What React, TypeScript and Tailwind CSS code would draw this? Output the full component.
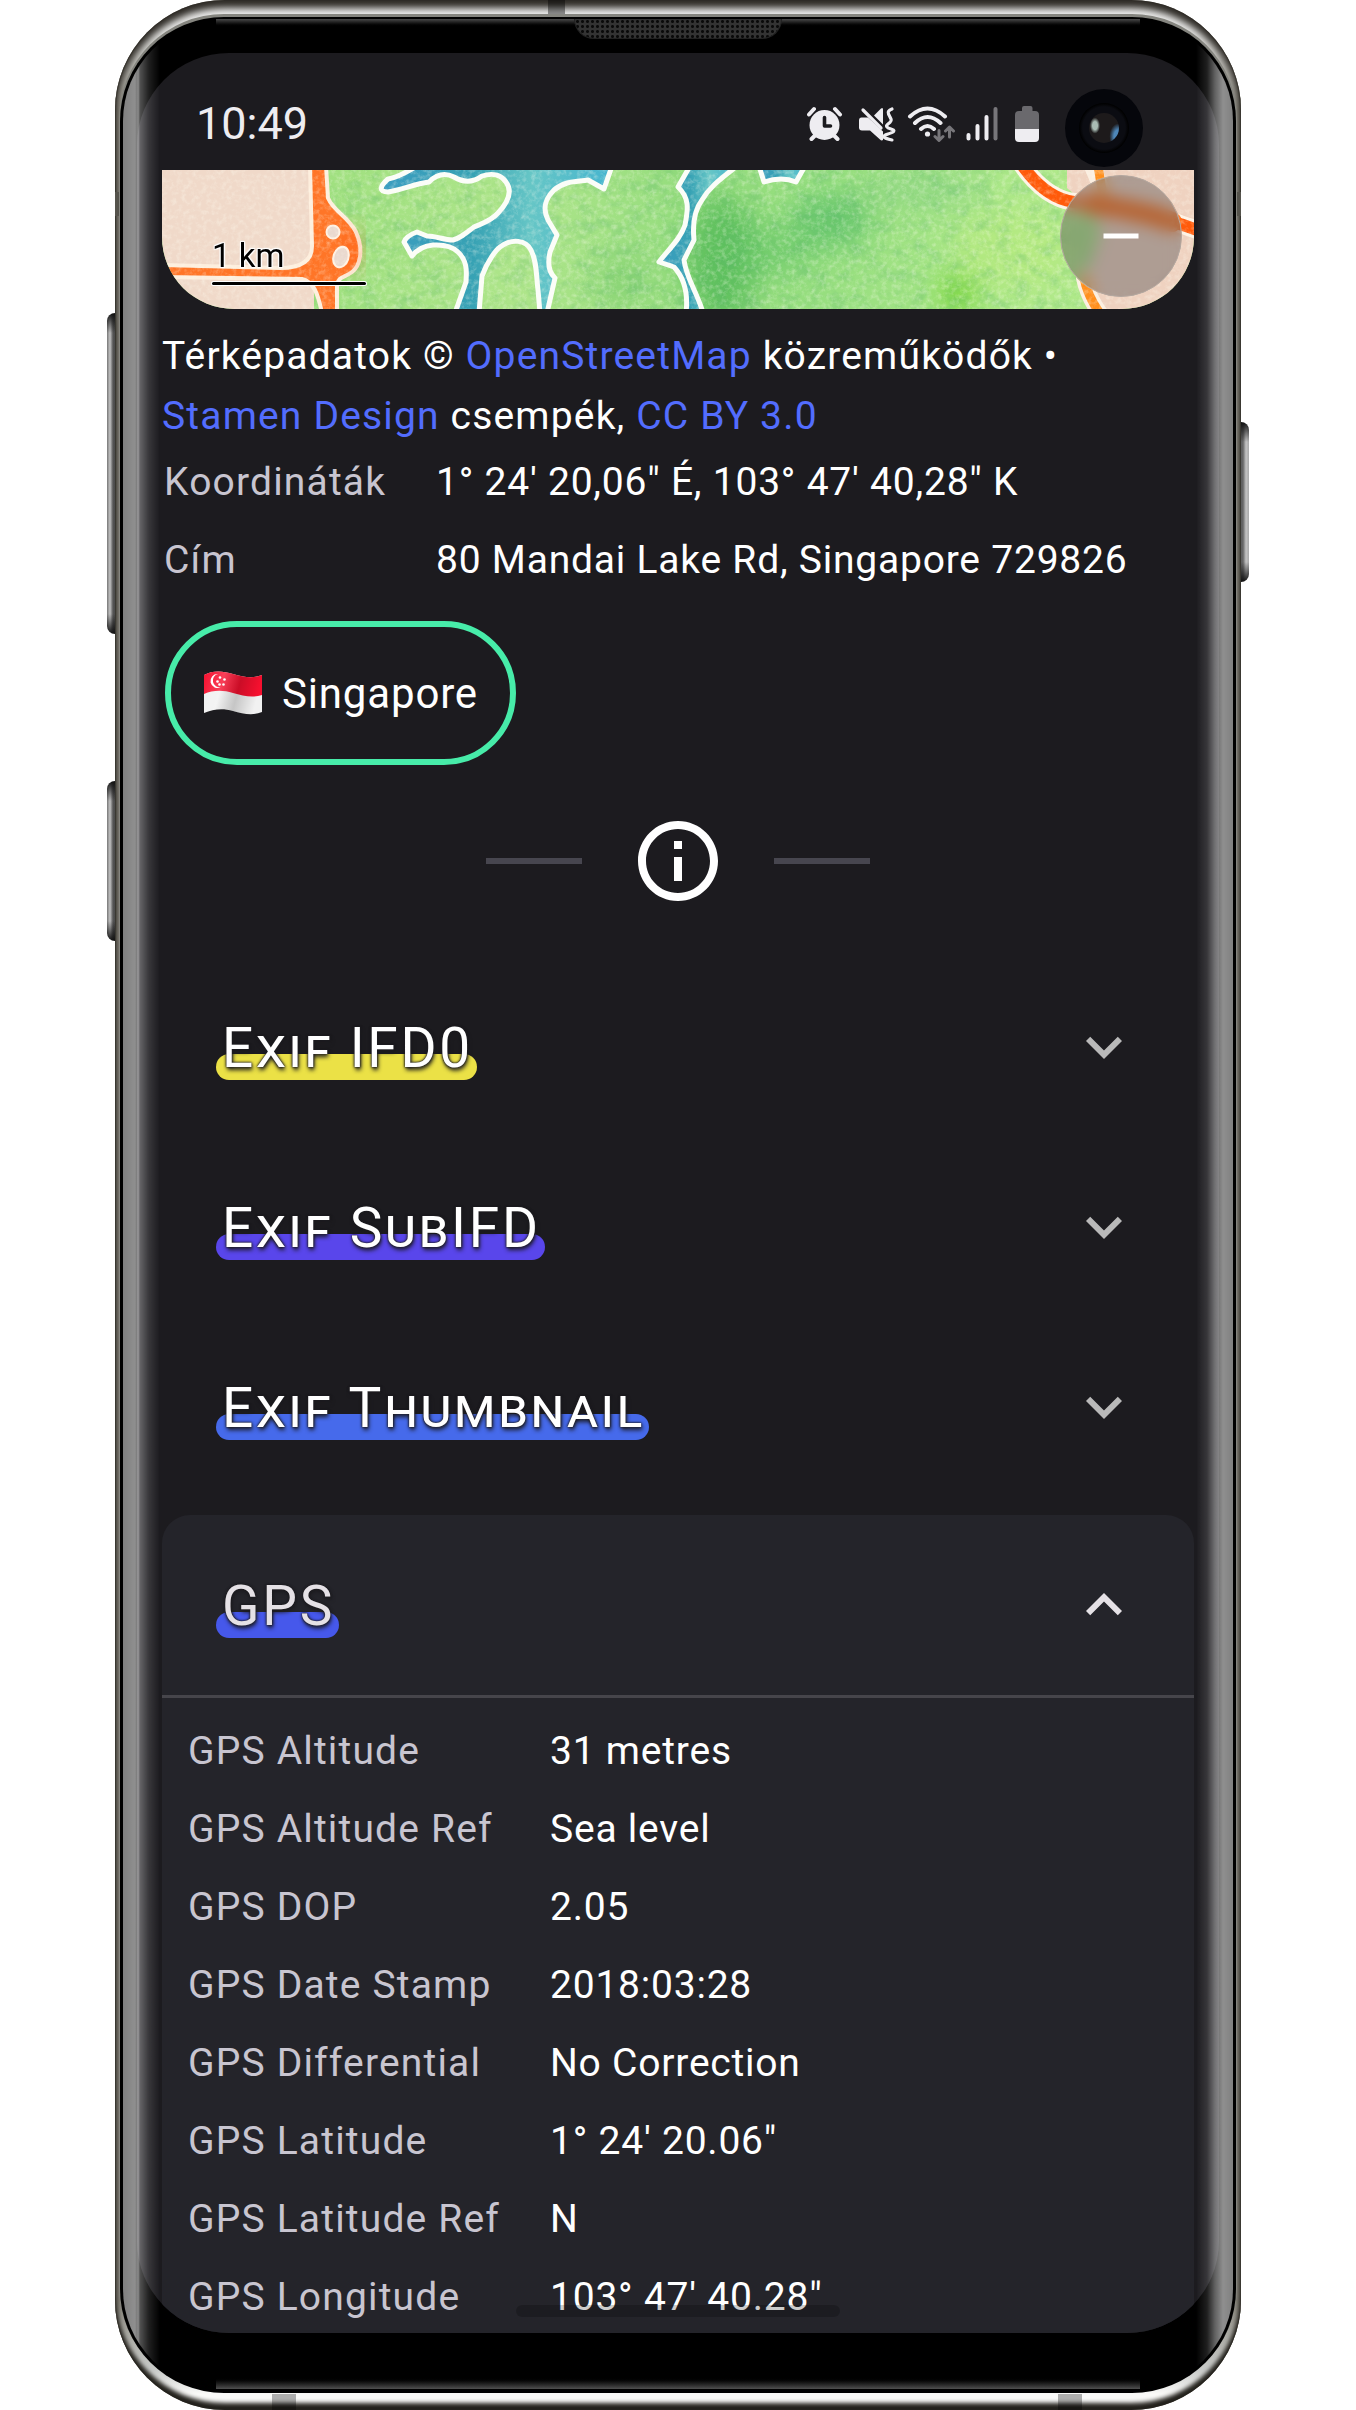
import { useState } from "react";

type Row = { label: string; value: string };
type Section = { title: string; highlight: string; rows: Row[] };

const placeRows: Row[] = [
  { label: "Koordináták", value: "1° 24' 20,06\" É, 103° 47' 40,28\" K" },
  { label: "Cím", value: "80 Mandai Lake Rd, Singapore 729826" },
];

const sections: Section[] = [
  { title: "Exif IFD0", highlight: "bg-[#ebe146]", rows: [] },
  { title: "Exif SubIFD", highlight: "bg-[#5946eb]", rows: [] },
  { title: "Exif Thumbnail", highlight: "bg-[#466aeb]", rows: [] },
  {
    title: "GPS",
    highlight: "bg-[#4658eb]",
    rows: [
      { label: "GPS Altitude", value: "31 metres" },
      { label: "GPS Altitude Ref", value: "Sea level" },
      { label: "GPS DOP", value: "2.05" },
      { label: "GPS Date Stamp", value: "2018:03:28" },
      { label: "GPS Differential", value: "No Correction" },
      { label: "GPS Latitude", value: "1° 24' 20.06\"" },
      { label: "GPS Latitude Ref", value: "N" },
      { label: "GPS Longitude", value: "103° 47' 40.28\"" },
    ],
  },
];

function StatusIcons() {
  return (
    <div className="flex items-center gap-2.5 text-[#eeedf1]" aria-hidden="true">
      <svg width="42" height="36" viewBox="0 0 42 36" fill="none">
        <circle cx="17.5" cy="19" r="15" fill="currentColor" />
        <path d="M2 8.500 7 3M28 3l5 5.500M4.500 33l4-4M30.500 33l-4-4" stroke="currentColor" strokeWidth="4" strokeLinecap="round" />
        <path d="M17.500 11.500V20H23.500" stroke="#1c1b1f" strokeWidth="3.600" strokeLinecap="round" strokeLinejoin="round" />
      </svg>
      <svg width="38" height="36" viewBox="0 0 38 36" fill="none">
        <path d="M2.500 11.500H9L24 25.500V34Q22.500 35 21 33.500L11 24.500H3Q0 24.500 0 21.500V14.500Q0 11.500 2.500 11.500Z" fill="currentColor" />
        <path d="M15 9.500 22 2.500Q24 1 24 3.500V18.500Z" fill="currentColor" />
        <path d="M4 4 22 22" stroke="currentColor" strokeWidth="3.200" strokeLinecap="round" />
        <path d="M33 3Q28 5 29.500 8T32 13 29 18 32 23 29 28 33 34" stroke="currentColor" strokeWidth="3.200" strokeLinecap="round" />
      </svg>
      <svg width="49" height="36" viewBox="0 0 49 36" fill="none" strokeLinecap="round">
        <path d="M3 10.500Q20.500-5.500 38 10.500M8 17Q20.500 5 33.500 17M14 23Q20.500 17 27 23" stroke="currentColor" strokeWidth="4" />
        <circle cx="20.500" cy="28" r="2.600" fill="currentColor" />
        <path d="M32 24.500V34M28 30.500 32 34.500 36 30.500M42.500 31V21M38.500 25 42.500 21 46.500 25" stroke="#77767a" strokeWidth="3" strokeLinejoin="round" />
      </svg>
      <svg width="39" height="36" viewBox="0 0 39 36" fill="none" strokeLinecap="round" strokeWidth="4">
        <path d="M2.500 29V32.500M11.500 20V32.500M20.500 11V32.500" stroke="currentColor" />
        <path d="M29.500 3V32.500" stroke="#77767a" />
      </svg>
      <svg width="24" height="36" viewBox="0 0 24 36">
        <path d="M7 2Q7 0 9 0H15.500Q17.500 0 17.500 2V5H20Q24 5 24 9V23H0V9Q0 5 4 5H7Z" fill="#6a696d" />
        <path d="M0 23H24V32Q24 36 20 36H4Q0 36 0 32Z" fill="currentColor" />
      </svg>
    </div>
  );
}

function WatercolorMap() {
  return (
    <svg className="absolute inset-0 size-full" viewBox="0 0 1032 139" preserveAspectRatio="xMidYMid slice" role="img" aria-label="Térkép">
      <defs>
        <linearGradient id="land" x1="0" x2="1" y1="0" y2="0">
          <stop offset="0.150" stopColor="#9fe07f" />
          <stop offset="0.350" stopColor="#aee58a" />
          <stop offset="0.500" stopColor="#96dd7e" />
          <stop offset="0.650" stopColor="#98df80" />
          <stop offset="0.850" stopColor="#b0e98a" />
        </linearGradient>
        <linearGradient id="water" x1="0" x2="1" y1="0" y2="0">
          <stop offset="0" stopColor="#3a9cc0" />
          <stop offset="0.400" stopColor="#37a2b4" />
          <stop offset="0.650" stopColor="#66c6c6" />
          <stop offset="1" stopColor="#45b4cf" />
        </linearGradient>
        <filter id="soft" x="-50%" y="-50%" width="200%" height="200%">
          <feGaussianBlur stdDeviation="14" />
        </filter>
        <filter id="pigment" x="0" y="0" width="100%" height="100%">
          <feTurbulence type="fractalNoise" baseFrequency="0.060 0.080" numOctaves="5" seed="4" />
          <feColorMatrix values="0 0 0 0 0.100  0 0 0 0 0.450  0 0 0 0 0.150  1.800 0 0 0 -0.800" />
        </filter>
        <filter id="paper" x="0" y="0" width="100%" height="100%">
          <feTurbulence type="fractalNoise" baseFrequency="0.200" numOctaves="4" seed="9" />
          <feColorMatrix values="0 0 0 0 1  0 0 0 0 1  0 0 0 0 0.900  0 1.600 0 0 -0.680" />
        </filter>
      </defs>
      <rect width="1032" height="139" fill="url(#land)" />
      <g filter="url(#soft)">
        <ellipse cx="560" cy="90" rx="36" ry="66" fill="#52b955" opacity="0.800" />
        <ellipse cx="670" cy="50" rx="40" ry="26" fill="#5cc168" opacity="0.800" />
        <ellipse cx="610" cy="80" rx="46" ry="26" fill="#62c566" opacity="0.600" />
        <ellipse cx="797" cy="122" rx="18" ry="20" fill="#72d42f" />
        <ellipse cx="850" cy="80" rx="60" ry="40" fill="#b5ea80" opacity="0.800" />
        <ellipse cx="760" cy="20" rx="60" ry="16" fill="#86d080" opacity="0.700" />
        <ellipse cx="460" cy="110" rx="26" ry="26" fill="#7acb6c" opacity="0.600" />
      </g>
      <rect width="1032" height="139" filter="url(#pigment)" opacity="0.400" />
      <path d="M0 0H152V139H0Z" fill="#f0d9c9" />
      <path d="M905-3H1035V142H934L922 112 940 60 926 36 905 18Z" fill="#efd2c0" />
      <g fill="url(#water)" stroke="#fbfdf8" strokeWidth="5" strokeLinejoin="round">
        <path d="M255-4Q235 8 226 9C218 16 216 22 226 22 240 20 252 14 267 12 275 4 284 3 292 7 302 13 312 12 320 6 332 2 340 6 344 12 350 20 348 30 336 43 328 52 318 54 312 57 303 64 298 68 291 70 282 70 274 66 265 66L255 62Q244 66 242 72L250 86Q258 76 271 75 288 74 296 82C307 92 304 106 304 112L293 143H317L320 106C326 90 334 80 338 77 350 68 364 70 369 80 375 92 374 104 376 120L378 143H385L393 108Q384 100 388 82L395 65 386 50C378 34 388 24 392 20 404 10 416 12 426 10L442 19 450-4Z" />
        <path d="M528-4 516 17C528 28 526 40 523 55 518 70 506 80 497 92L512 97C524 110 526 126 524 143H541C536 124 524 108 522 90L532 70C530 50 534 38 540 30 548 16 560 8 575-4Z" />
        <path d="M597-4 602 12Q620 6 634 12L643-4Z" />
      </g>
      <g fill="none" strokeLinecap="round">
        <path d="M930-4 940 20M922 108Q926 128 940 146" stroke="#fbeee0" strokeWidth="16" />
        <path d="M936-4 940 20M922 108Q926 128 940 146" stroke="#ff8f1e" strokeWidth="9" />
        <path d="M858-8Q882 28 912 32C950 38 990 42 1040 62" stroke="#fdf3e6" strokeWidth="18" />
        <path d="M858-8Q882 28 912 32C950 38 990 42 1040 62" stroke="#ff5a0a" strokeWidth="12" />
        <path d="M930 34C960 38 990 44 1010 52" stroke="#ff6a10" strokeWidth="20" />
        <path d="M20 122 60 145" stroke="#fbe2b8" strokeWidth="3" />
      </g>
      <path
        d="M148-4H164L166 28C172 42 186 46 194 62 202 80 198 96 190 102 182 108 176 106 175 116V143H160C156 124 152 112 140 109L-4 107V95L118 98C138 98 150 92 150 76Z"
        fill="#ff7527"
        stroke="#fdeedd"
        strokeWidth="4"
      />
      <ellipse cx="192" cy="80" rx="6" ry="18" fill="#ff4a0c" opacity="0.700" filter="url(#soft)" />
      <circle cx="171" cy="62" r="6.500" fill="#ead9cf" stroke="#fff0e2" strokeWidth="2" />
      <ellipse cx="179" cy="87" rx="7.500" ry="10.500" transform="rotate(18 179 87)" fill="#ead9cf" stroke="#fff0e2" strokeWidth="2" />
      <rect width="1032" height="139" filter="url(#paper)" opacity="0.450" />
    </svg>
  );
}

function SingaporeFlag() {
  return (
    <svg width="60" height="44" viewBox="0 0 60 44" aria-hidden="true">
      <defs>
        <linearGradient id="fold" x1="0" x2="1" y1="0" y2="0.200">
          <stop offset="0" stopColor="#fff" stopOpacity="0" />
          <stop offset="0.350" stopColor="#fff" stopOpacity="0.200" />
          <stop offset="0.650" stopColor="#000" stopOpacity="0.180" />
          <stop offset="1" stopColor="#000" stopOpacity="0" />
        </linearGradient>
      </defs>
      <path d="M1 4C10-1 20 0 30 3S50 8 59 4V41C50 45 40 43 30 40S10 38 1 42Z" fill="#f1f1f1" />
      <path d="M1 4C10-1 20 0 30 3S50 8 59 4V24C50 27 40 25 30 22S10 19 1 23Z" fill="#f7102f" />
      <path d="M15 3A7 7 0 1 0 18 16 6.500 6.500 0 0 1 15 3Z" fill="#fff" />
      <g fill="#fff">
        <circle cx="17" cy="6.500" r="1.300" />
        <circle cx="21.500" cy="8.500" r="1.300" />
        <circle cx="14.500" cy="10.500" r="1.300" />
        <circle cx="16.500" cy="13.500" r="1.300" />
        <circle cx="20.500" cy="13.500" r="1.300" />
      </g>
      <path d="M1 4C10-1 20 0 30 3S50 8 59 4V41C50 45 40 43 30 40S10 38 1 42Z" fill="url(#fold)" />
    </svg>
  );
}

function InfoRows({ rows, wide }: { rows: Row[]; wide?: boolean }) {
  return (
    <dl className="flex flex-col gap-1.5 pl-0.5 leading-[72px]">
      {rows.map((row) => (
        <div key={row.label} className="flex">
          <dt className={wide ? "w-[362px] shrink-0 tracking-[0.03em] text-[#c8c5d0]" : "w-[272px] shrink-0 tracking-[0.03em] text-[#c8c5d0]"}>
            {row.label}
          </dt>
          <dd className="grow tracking-[0.02em]">{row.value}</dd>
        </div>
      ))}
    </dl>
  );
}

function MetadataSection({ section, open, onToggle }: { section: Section; open: boolean; onToggle: () => void }) {
  return (
    <section className={open ? "mt-[18px] rounded-t-[28px] bg-[#24242a]" : ""}>
      <h2>
        <button
          type="button"
          aria-expanded={open}
          onClick={onToggle}
          className={
            open
              ? "flex h-[180px] w-full items-center justify-between px-[54px] text-[#e5e1e6]"
              : "flex h-[180px] w-full items-center justify-between px-[54px] text-white"
          }
        >
          <span className="relative pt-0.5 pr-1 pl-1.5 text-[55px] leading-16 tracking-wider [font-variant-caps:small-caps]">
            <span className={"absolute inset-x-0 bottom-0 h-[26px] rounded-full " + section.highlight} />
            <span className="relative [text-shadow:0_0_2px_#1c1b1f,1px_3px_4px_#1c1b1f,0_0_3px_#1c1b1f]">{section.title}</span>
          </span>
          <svg className={open ? "size-[72px]" : "size-[72px] text-[#b9b9b9]"} viewBox="0 0 24 24" fill="currentColor" aria-hidden="true">
            <path d={open ? "M12 8l-6 6 1.410 1.410L12 10.830l4.590 4.580L18 14z" : "M16.590 8.590L12 13.170 7.410 8.590 6 10l6 6 6-6z"} />
          </svg>
        </button>
      </h2>
      {open && (
        <div className="border-t-3 border-[#46454b] px-6 pt-[17px]">
          <InfoRows rows={section.rows} wide />
        </div>
      )}
    </section>
  );
}

export default function App() {
  const [opened, setOpened] = useState<string[]>(["GPS"]);
  const toggle = (title: string) =>
    setOpened((list) => (list.includes(title) ? list.filter((t) => t !== title) : [...list, title]));

  return (
    <div className="min-h-screen bg-white px-[115px] font-[Roboto,sans-serif]">
      <div className="relative">
        {/* side keys */}
        <div className="absolute top-[313px] -left-2 h-[321px] w-4 rounded-l-lg bg-[linear-gradient(#111,transparent_20px,transparent_301px,#111),linear-gradient(90deg,#777,#c4c4c4_3px,#555_6px,#222)]" />
        <div className="absolute top-[781px] -left-2 h-40 w-4 rounded-l-lg bg-[linear-gradient(#111,transparent_20px,transparent_140px,#111),linear-gradient(90deg,#777,#c4c4c4_3px,#555_6px,#222)]" />
        <div className="absolute top-[422px] -right-2 h-40 w-4 rounded-r-lg bg-[linear-gradient(#111,transparent_20px,transparent_140px,#111),linear-gradient(270deg,#aaa,#c4c4c4_3px,#666_6px,#444)]" />

        {/* metal frame */}
        <div className="relative overflow-hidden rounded-[110px] bg-[linear-gradient(#f0f0f0,#e6e6e4_30px,#8d8a80_110px,#8d8a80_calc(100%-110px),#c9cbc9_calc(100%-40px),#fafaf8_calc(100%-16px))] px-[5px] py-[17px] shadow-[inset_0_7px_7px_1px_#2e2b26,inset_0_-7px_4px_#24221d,inset_0_0_0_1px_#66635a]">
          <div className="absolute top-0 left-[433px] h-[17px] w-[17px] bg-black/40" />
          <div className="absolute bottom-0 left-[157px] h-4 w-6 bg-black/30" />
          <div className="absolute right-[159px] bottom-0 h-4 w-6 bg-black/30" />
          <div className="absolute inset-x-0 top-[192px] h-6 bg-[#55534c]" />

          {/* glass */}
          <div className="relative overflow-hidden rounded-[104px] bg-black px-[17px] pt-9 pb-15 shadow-[0_-2px_0_1px_#85857f]">
            <div className="absolute inset-x-24 top-[2px] h-2 bg-linear-to-b from-[#4a4a4a] to-black" />
            <div className="absolute inset-x-24 bottom-1 h-3 bg-linear-to-t from-[#505050] to-black" />
            <div className="absolute top-[2px] left-1/2 h-5 w-52 -translate-x-1/2 rounded-b-[20px] border border-t-0 border-[#222] bg-[#333] bg-[radial-gradient(circle,#0a0a0a_1px,transparent_2px)] bg-size-[5px_5px]" />

            <main className="relative overflow-hidden rounded-[92px] bg-[#1c1b1f] px-[25px] text-[39px] text-white">
              <header className="flex h-[117px] items-center justify-between pt-6 pr-[155px] pl-[34px]">
                <time className="text-[45px] text-[#eeedf1]">10:49</time>
                <StatusIcons />
              </header>
              <div className="absolute top-9 right-[76px] flex size-[78px] items-center justify-center rounded-full bg-[#05060b]">
                <div className="flex size-[50px] items-center justify-center rounded-full bg-[radial-gradient(circle,#0b0c12_60%,#000_70%)]">
                  <div className="size-[30px] rounded-full bg-[radial-gradient(ellipse_5px_8px_at_20%_42%,#a9bcb4_50%,transparent),radial-gradient(ellipse_9px_13px_at_98%_78%,#4d86b8_50%,transparent),linear-gradient(#1d1a1b,#1d1a1b)]" />
                </div>
              </div>

              <div className="relative flex h-[139px] items-end justify-between overflow-hidden rounded-b-[72px] pr-3 pl-[50px]">
                <WatercolorMap />
                <div className="relative mb-6 flex w-[154px] flex-col gap-1.5 text-black">
                  <div className="text-[33px] leading-10 [text-shadow:0_0_2px_#fff,1px_1px_1px_#fff,-1px_-1px_1px_#fff,1px_-1px_1px_#fff,-1px_1px_1px_#fff]">1 km</div>
                  <div className="h-[3px] rounded-full bg-black ring-1 ring-white" />
                </div>
                <button
                  type="button"
                  aria-label="Kicsinyítés"
                  className="relative mb-3 flex size-[122px] items-center justify-center rounded-full border border-[#b3a79f] bg-[#4b484b]/40 backdrop-blur-[8px]"
                >
                  <svg className="size-15" viewBox="0 0 24 24" fill="#fff" aria-hidden="true">
                    <path d="M19 13H5v-2h14v2z" />
                  </svg>
                </button>
              </div>

              <p className="mt-[17px] leading-15 tracking-[0.03em]">
                Térképadatok © <a href="#osm" className="text-[#536dfe]">OpenStreetMap</a> közreműködők •{" "}
                <a href="#stamen" className="inline-block text-[#536dfe]">Stamen Design</a> csempék,{" "}
                <a href="#license" className="text-[#536dfe]">CC BY 3.0</a>
              </p>
              <InfoRows rows={placeRows} />

              <button type="button" className="mt-[25px] ml-[3px] flex h-36 items-center gap-[19px] rounded-full border-6 border-[#47eca9] px-8 text-[42px] tracking-[0.02em]">
                <SingaporeFlag />
                Singapore
              </button>

              <div className="flex h-48 items-center justify-center gap-12">
                <div className="h-1.5 w-24 bg-[#47464f]" />
                <svg className="size-24" viewBox="0 0 24 24" fill="#fff" aria-hidden="true">
                  <path d="M11 7h2v2h-2zm0 4h2v6h-2zm1-9C6.480 2 2 6.480 2 12s4.480 10 10 10 10-4.480 10-10S17.520 2 12 2zm0 18c-4.410 0-8-3.590-8-8s3.590-8 8-8 8 3.590 8 8-3.590 8-8 8z" />
                </svg>
                <div className="h-1.5 w-24 bg-[#47464f]" />
              </div>

              {sections.map((section) => (
                <MetadataSection
                  key={section.title}
                  section={section}
                  open={opened.includes(section.title)}
                  onToggle={() => toggle(section.title)}
                />
              ))}

              <div className="absolute bottom-4 left-1/2 h-3 w-[324px] -translate-x-1/2 rounded-full bg-black/20" />
            </main>

            {/* curved-edge reflections */}
            <div className="pointer-events-none absolute inset-[3px] rounded-[101px] bg-[linear-gradient(90deg,rgba(255,255,255,.5),rgba(255,255,255,.56)_12px,rgba(255,255,255,.48)_14px,rgba(255,255,255,.56)_15px,rgba(255,255,255,.32)_17px,rgba(255,255,255,.12)_26px,transparent_37px,transparent_calc(100%-37px),rgba(255,255,255,.12)_calc(100%-26px),rgba(255,255,255,.38)_calc(100%-18px),rgba(255,255,255,.56)_calc(100%-10px),rgba(255,255,255,.5))]" />
          </div>
        </div>
      </div>
    </div>
  );
}
